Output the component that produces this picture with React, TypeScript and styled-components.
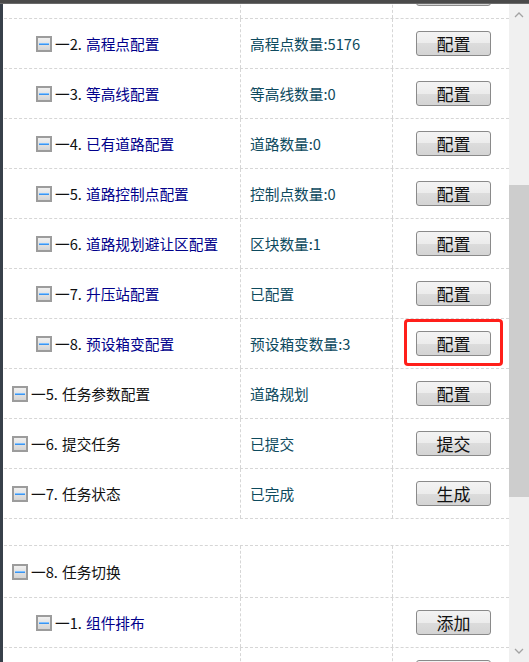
import React from 'react';
import styled, { createGlobalStyle, css } from 'styled-components';

const GlobalStyle = createGlobalStyle`
  html, body { margin: 0; padding: 0; background: #ffffff; overflow: hidden; }
  body { font-family: "Noto Sans CJK SC", "Liberation Sans", sans-serif; }
`;

const LINE = '#d6d6d6';

const Frame = styled.div`
  width: 529px;
  height: 662px;
  display: flex;
  flex-direction: column;
  overflow: hidden;
  background: #ffffff;
`;

const TopBar = styled.div`
  flex: none;
  height: 4px;
  background: #4a4a4a;
  border-bottom: 1px solid #6a6a6a;
  box-sizing: border-box;
`;

const Body = styled.div`
  flex: 1;
  min-height: 0;
  display: flex;
`;

const LeftEdge = styled.div`
  flex: none;
  width: 3px;
  background: #38404a;
`;

const Viewport = styled.div`
  flex: 1;
  min-width: 0;
  overflow: hidden;
  padding-left: 1px;
`;

const Content = styled.div`
  margin-top: -35px;
  display: flex;
  flex-direction: column;
`;

const Table = styled.div<{ $bordered?: boolean }>`
  display: flex;
  flex-direction: column;
  ${(p) =>
    p.$bordered &&
    css`
      border-top: 1px dashed ${LINE};
    `}
`;

const Gap = styled.div`
  height: 26px;
`;

const Row = styled.div<{ $h: number }>`
  display: grid;
  grid-template-columns: 237px 152px 1fr;
  height: ${(p) => p.$h}px;
  box-sizing: border-box;
  border-bottom: 1px dashed ${LINE};
`;

const Cell = styled.div`
  display: flex;
  align-items: center;
  box-sizing: border-box;
  min-width: 0;
  white-space: nowrap;
  font-size: 14.7px;
  padding-bottom: 1px;
`;

const NameCell = styled(Cell)<{ $level: number }>`
  padding-left: ${(p) => (p.$level === 0 ? 8 : 32)}px;
  border-right: 1px dashed ${LINE};
`;

const InfoCell = styled(Cell)`
  padding-left: 9px;
  border-right: 1px dashed ${LINE};
  color: #0d4a5e;
`;

const ActionCell = styled(Cell)`
  padding-left: 23px;
  padding-bottom: 0;
`;

const IconSvg = styled.svg`
  flex: none;
  display: block;
  margin-top: 1px;
`;

const Prefix = styled.span`
  margin-left: 3px;
  color: #111111;
`;

const Label = styled.span<{ $sub: boolean }>`
  margin-left: 4px;
  color: ${(p) => (p.$sub ? '#00008b' : '#111111')};
`;

const ActionButton = styled.button<{ $highlight?: boolean }>`
  position: relative;
  flex: none;
  width: 75px;
  height: 25px;
  padding: 0;
  box-sizing: border-box;
  font-family: "Noto Sans CJK SC", sans-serif;
  font-size: 17px;
  line-height: 21px;
  color: #111111;
  border: 1px solid #8a8a8a;
  border-radius: 3px;
  background: linear-gradient(to bottom, #f3f3f3 0%, #ececec 50%, #dcdcdc 50%, #d4d4d4 100%);
  ${(p) =>
    p.$highlight &&
    css`
      &::after {
        content: '';
        position: absolute;
        left: -13px;
        right: -13px;
        top: -13px;
        bottom: -11px;
        border: 3px solid #ff1f1a;
        border-radius: 4px;
        pointer-events: none;
      }
    `}
`;

const ScrollTrack = styled.div`
  flex: none;
  width: 20px;
  background: #f0f0f0;
  display: flex;
  flex-direction: column;
`;

const ArrowBox = styled.div`
  flex: none;
  height: 22px;
  display: flex;
  align-items: center;
  justify-content: center;
`;

const Thumb = styled.div`
  flex: none;
  margin-top: 159px;
  height: 312px;
  background: #cdcdcd;
`;

const TrackRest = styled.div`
  flex: 1;
`;

const TreeIcon = () => (
  <IconSvg width="16" height="16" viewBox="0 0 16 16">
    <defs>
      <linearGradient id="tiFill" x1="0" y1="0" x2="0" y2="1">
        <stop offset="0" stopColor="#f0f0f0" />
        <stop offset="1" stopColor="#d4d4d4" />
      </linearGradient>
    </defs>
    <rect x="0" y="0" width="16" height="16" fill="#9c9c9c" />
    <rect x="2" y="2" width="12" height="12" fill="url(#tiFill)" />
    <rect x="3" y="7" width="10" height="1" fill="#7fc0ff" />
    <rect x="3" y="8" width="10" height="1" fill="#3b95f0" />
  </IconSvg>
);

const Chevron = ({ down }: { down?: boolean }) => (
  <svg width="10" height="6" viewBox="0 0 10 6">
    <polyline
      points={down ? '1,1 5,5 9,1' : '1,5 5,1 9,5'}
      fill="none"
      stroke="#a3a3a3"
      strokeWidth="1.3"
    />
  </svg>
);

type Item = {
  level: 0 | 1;
  no?: number;
  name?: string;
  info?: string;
  button?: string;
  highlight?: boolean;
};

const mainItems: Item[] = [
  { level: 1, button: '' },
  { level: 1, no: 2, name: '高程点配置', info: '高程点数量:5176', button: '配置' },
  { level: 1, no: 3, name: '等高线配置', info: '等高线数量:0', button: '配置' },
  { level: 1, no: 4, name: '已有道路配置', info: '道路数量:0', button: '配置' },
  { level: 1, no: 5, name: '道路控制点配置', info: '控制点数量:0', button: '配置' },
  { level: 1, no: 6, name: '道路规划避让区配置', info: '区块数量:1', button: '配置' },
  { level: 1, no: 7, name: '升压站配置', info: '已配置', button: '配置' },
  { level: 1, no: 8, name: '预设箱变配置', info: '预设箱变数量:3', button: '配置', highlight: true },
  { level: 0, no: 5, name: '任务参数配置', info: '道路规划', button: '配置' },
  { level: 0, no: 6, name: '提交任务', info: '已提交', button: '提交' },
  { level: 0, no: 7, name: '任务状态', info: '已完成', button: '生成' },
];

const switchItems: { item: Item; h: number }[] = [
  { item: { level: 0, no: 8, name: '任务切换' }, h: 52 },
  { item: { level: 1, no: 1, name: '组件排布', button: '添加' }, h: 50 },
  { item: { level: 1, button: '' }, h: 50 },
];

const TreeRow = ({ item, h }: { item: Item; h: number }) => (
  <Row $h={h}>
    <NameCell $level={item.level}>
      {item.name && (
        <>
          <TreeIcon />
          <Prefix>一{item.no}.</Prefix>
          <Label $sub={item.level === 1}>{item.name}</Label>
        </>
      )}
    </NameCell>
    <InfoCell>{item.info}</InfoCell>
    <ActionCell>
      {item.button !== undefined && (
        <ActionButton $highlight={item.highlight}>{item.button}</ActionButton>
      )}
    </ActionCell>
  </Row>
);

export default function App() {
  return (
    <>
      <GlobalStyle />
      <Frame>
        <TopBar />
        <Body>
          <LeftEdge />
          <Viewport>
            <Content>
              <Table>
                {mainItems.map((it, i) => (
                  <TreeRow key={i} item={it} h={50} />
                ))}
              </Table>
              <Gap />
              <Table $bordered>
                {switchItems.map((r, i) => (
                  <TreeRow key={i} item={r.item} h={r.h} />
                ))}
              </Table>
            </Content>
          </Viewport>
          <ScrollTrack>
            <ArrowBox>
              <Chevron />
            </ArrowBox>
            <Thumb />
            <TrackRest />
            <ArrowBox>
              <Chevron down />
            </ArrowBox>
          </ScrollTrack>
        </Body>
      </Frame>
    </>
  );
}
